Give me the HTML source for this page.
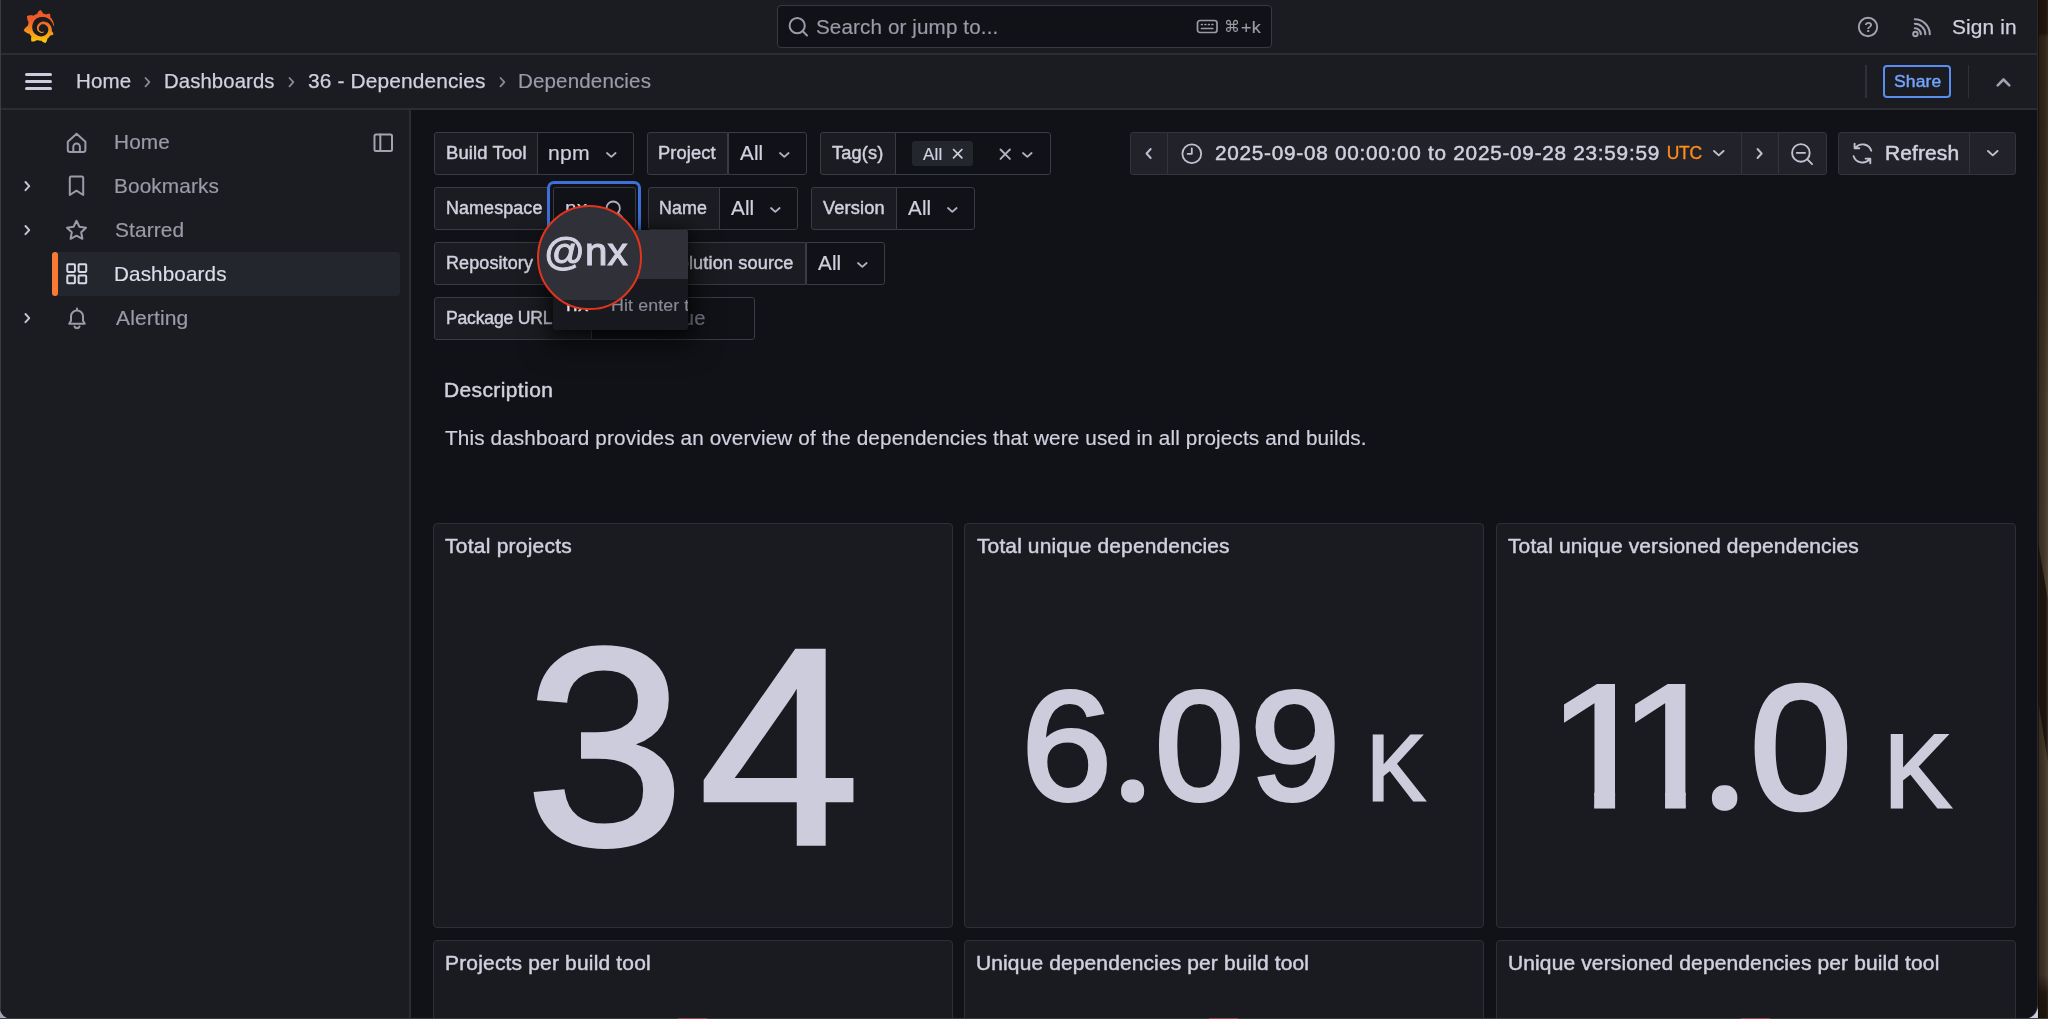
<!DOCTYPE html>
<html lang="en">
<head>
<meta charset="utf-8">
<title>Dependencies - Dashboards - Grafana</title>
<style>
*{box-sizing:border-box;margin:0;padding:0}
html,body{width:2048px;height:1019px;overflow:hidden;background:#3f3023}
body{font-family:"Liberation Sans",Arial,sans-serif;color:#ccccdc;position:relative}
.abs{position:absolute}
.t{position:absolute;white-space:nowrap;line-height:1}
#desk{position:absolute;left:2030px;top:0;width:18px;height:1019px;background:linear-gradient(180deg,#21150d 0,#23170e 33px,#35281b 37px,#392c1e 260px,#483b2c 400px,#4b3e30 540px,#473b2d 760px,#45392c 975px,#23180f 993px,#1e140c 1019px)}
#desk2{position:absolute;left:2038px;top:530px;width:10px;height:250px;background:#1d1510;clip-path:polygon(0 5%,100% 28%,100% 93%,0 68%);filter:blur(1.5px)}
#desk3{position:absolute;left:2038px;top:0;width:10px;height:1019px;background:linear-gradient(90deg,rgba(12,8,4,0.7) 0,rgba(12,8,4,0.7) 1px,rgba(20,14,8,0.32) 1.5px,rgba(20,14,8,0.22) 5px,rgba(20,14,8,0) 8px,rgba(255,240,220,0.06) 10px)}
#win{will-change:transform;position:absolute;left:0;top:0;width:2038px;height:1019px;background:#111217;border-right:1px solid #2a2b31;border-radius:0 0 14px 12px;overflow:hidden}
#cbl{position:absolute;left:0;top:1003px;width:16px;height:16px;background:#a4a4b4}
#cbr{position:absolute;left:2022px;top:1003px;width:16px;height:16px;background:#cdcde1}
#brow{position:absolute;left:0;top:1018px;width:2048px;height:1px;background:#3b3c41;z-index:60}
#lb{position:absolute;left:0;top:0;width:1px;height:1019px;background:#3c3d44;z-index:50}
svg{position:absolute;overflow:visible}
.ic{fill:none;stroke:#b4b4c4;stroke-width:2;stroke-linecap:round;stroke-linejoin:round}
</style>
</head>
<body>
<div id="desk"></div><div id="desk2"></div><div id="desk3"></div><div id="cbl"></div><div id="cbr"></div>
<div id="win">
<div class="abs" style="left:0px;top:0px;width:2039.00px;height:53.00px;background:#1b1c21"></div>
<div class="abs" style="left:0px;top:53px;width:2039.00px;height:2.00px;background:#2c2d33"></div>
<div class="abs" style="left:0px;top:55px;width:2039.00px;height:53.00px;background:#1b1c21"></div>
<div class="abs" style="left:0px;top:108px;width:2039.00px;height:1.5px;background:#2c2d33"></div>
<svg style="left:23px;top:10px" width="31.7" height="33" viewBox="0 0 351 365"><defs><linearGradient id="lg" gradientUnits="userSpaceOnUse" x1="175.5" y1="445.4948" x2="175.5" y2="114.0346"><stop offset="0" stop-color="#FFF100"/><stop offset="1" stop-color="#F05A28"/></linearGradient></defs><path fill="url(#lg)" d="M342,161.2c-0.6-6.1-1.600-13.100-3.600-20.900c-2-7.700-5-16.200-9.400-25c-4.400-8.800-10.100-17.900-17.500-26.8 c-2.900-3.500-6.100-6.900-9.500-10.200c5.100-20.300-6.200-37.900-6.200-37.900c-19.500-1.200-31.9,6.100-36.5,9.400c-0.800-0.300-1.500-0.700-2.300-1 c-3.300-1.300-6.700-2.600-10.300-3.700c-3.500-1.100-7.100-2.100-10.800-3c-3.700-0.900-7.400-1.600-11.200-2.200c-0.700-0.100-1.300-0.200-2-0.3 c-8.500-27.200-32.900-38.600-32.900-38.600c-27.3,17.300-32.4,41.500-32.4,41.500s-0.1,0.500-0.3,1.400c-1.5,0.400-3,0.900-4.5,1.3 c-2.1,0.600-4.2,1.400-6.2,2.200c-2.1,0.800-4.1,1.600-6.2,2.500c-4.1,1.800-8.2,3.800-12.2,6c-3.9,2.200-7.7,4.600-11.4,7.1 c-0.500-0.200-1-0.400-1-0.400c-37.800-14.400-71.3,2.900-71.3,2.900c-3.1,40.2,15.1,65.5,18.7,70.100c-0.9,2.500-1.7,5-2.5,7.5 c-2.8,9.100-4.9,18.400-6.2,28.100c-0.2,1.400-0.4,2.800-0.5,4.200C18.8,192.7,8.5,228,8.5,228c29.1,33.5,63.1,35.6,63.1,35.6 c0,0,0.100-0.1,0.100-0.100c4.3,7.7,9.3,15,14.9,21.900c2.4,2.9,4.8,5.6,7.4,8.300c-10.6,30.4,1.5,55.6,1.5,55.6 c32.4,1.2,53.700-14.2,58.200-17.700c3.2,1.1,6.5,2.1,9.8,2.900c10,2.6,20.2,4.1,30.4,4.500c2.5,0.1,5.1,0.2,7.6,0.100l1.2,0l0.8,0l1.6,0 l1.600-0.100l0,0.100c15.3,21.8,42.1,24.9,42.1,24.900c19.100-20.1,20.200-40.1,20.200-44.400l0,0c0,0,0-0.1,0-0.300c0-0.4,0-0.6,0-0.600l0,0 c0-0.3,0-0.6,0-0.900c4-2.8,7.800-5.8,11.400-9.100c7.600-6.9,14.300-14.8,19.900-23.300c0.500-0.8,1-1.6,1.500-2.400c21.6,1.2,36.900-13.4,36.900-13.4 c-3.600-22.500-16.400-33.500-19.100-35.600l0,0c0,0-0.100-0.100-0.300-0.200c-0.200-0.100-0.200-0.200-0.200-0.200c0,0,0,0,0,0c-0.100-0.100-0.300-0.200-0.500-0.3 c0.100-1.4,0.200-2.7,0.300-4.100c0.200-2.4,0.200-4.9,0.200-7.300l0-1.800l0-0.900l0-0.500c0-0.6,0-0.4,0-0.600l-0.100-1.500l-0.100-2 c0-0.700-0.100-1.300-0.200-1.900c-0.100-0.600-0.100-1.300-0.200-1.900l-0.200-1.900l-0.300-1.900c-0.400-2.500-0.800-4.900-1.400-7.400c-2.300-9.700-6.100-18.900-11-27.2 c-5-8.300-11.200-15.600-18.300-21.800c-7-6.200-14.900-11.200-23.100-14.900c-8.300-3.700-16.900-6.100-25.500-7.200c-4.300-0.600-8.600-0.800-12.900-0.700l-1.6,0l-0.4,0 c-0.1,0-0.6,0-0.5,0l-0.7,0l-1.6,0.100c-0.6,0-1.2,0.100-1.7,0.100c-2.2,0.200-4.4,0.500-6.5,0.900c-8.6,1.600-16.7,4.700-23.8,9 c-7.1,4.300-13.3,9.600-18.3,15.600c-5,6-8.9,12.700-11.6,19.600c-2.7,6.900-4.2,14.100-4.6,21c-0.1,1.700-0.1,3.500-0.1,5.200c0,0.4,0,0.9,0,1.3 l0.1,1.400c0.1,0.8,0.1,1.7,0.2,2.500c0.3,3.5,1,6.9,1.9,10.100c1.9,6.5,4.9,12.4,8.6,17.400c3.7,5,8.2,9.1,12.9,12.4 c4.7,3.2,9.8,5.5,14.8,7c5,1.5,10,2.1,14.7,2.100c0.6,0,1.2,0,1.7,0c0.3,0,0.6,0,0.9,0c0.3,0,0.6,0,0.900-0.100c0.5,0,1-0.1,1.500-0.1 c0.1,0,0.3,0,0.400-0.100l0.500-0.100c0.3,0,0.600-0.1,0.900-0.100c0.600-0.1,1.100-0.2,1.700-0.300c0.600-0.1,1.100-0.2,1.600-0.400c1.100-0.2,2.100-0.6,3.100-0.9 c2-0.7,4-1.5,5.700-2.400c1.800-0.9,3.400-2,5-3c0.400-0.3,0.900-0.6,1.300-1c1.600-1.3,1.900-3.7,0.600-5.300c-1.100-1.400-3.100-1.800-4.700-0.9 c-0.4,0.200-0.8,0.400-1.2,0.600c-1.4,0.700-2.8,1.300-4.3,1.800c-1.5,0.500-3.1,0.900-4.7,1.200c-0.8,0.100-1.6,0.200-2.5,0.300c-0.4,0-0.8,0.100-1.3,0.1 c-0.4,0-0.9,0-1.2,0c-0.4,0-0.8,0-1.2,0c-0.5,0-1,0-1.500-0.100c0,0-0.3,0-0.1,0l-0.2,0l-0.3,0c-0.2,0-0.5,0-0.700-0.1 c-0.500-0.100-0.900-0.100-1.400-0.200c-3.700-0.500-7.400-1.600-10.900-3.200c-3.600-1.600-7-3.800-10.100-6.600c-3.100-2.800-5.800-6.100-7.900-9.900c-2.100-3.800-3.600-8-4.300-12.4 c-0.300-2.200-0.500-4.500-0.400-6.700c0-0.6,0.100-1.2,0.100-1.800c0,0.2,0-0.1,0-0.100l0-0.200l0-0.500c0-0.3,0.100-0.6,0.100-0.900c0.100-1.2,0.300-2.4,0.500-3.6 c1.700-9.6,6.500-19,13.900-26.100c1.900-1.8,3.900-3.4,6-4.900c2.100-1.5,4.400-2.8,6.800-3.900c2.400-1.1,4.800-2,7.400-2.700c2.500-0.7,5.100-1.1,7.800-1.4 c1.300-0.1,2.600-0.2,4-0.200c0.4,0,0.6,0,0.9,0l1.1,0l0.7,0c0.3,0,0,0,0.1,0l0.3,0l1.1,0.100c2.9,0.2,5.7,0.6,8.5,1.3 c5.6,1.2,11.1,3.3,16.2,6.100c10.2,5.7,18.9,14.5,24.2,25.100c2.7,5.3,4.6,11,5.5,16.900c0.2,1.5,0.4,3,0.5,4.500l0.1,1.100l0.1,1.1 c0,0.4,0,0.8,0,1.100c0,0.4,0,0.8,0,1.100l0,1l0,1.100c0,0.700-0.1,1.900-0.1,2.600c-0.1,1.600-0.3,3.300-0.5,4.900c-0.2,1.600-0.5,3.200-0.8,4.8 c-0.3,1.600-0.7,3.200-1.1,4.700c-0.8,3.100-1.8,6.200-3,9.300c-2.4,6-5.6,11.800-9.4,17.100c-7.7,10.600-18.2,19.200-30.2,24.7 c-6,2.700-12.3,4.700-18.8,5.700c-3.2,0.600-6.5,0.900-9.8,1l-0.6,0l-0.5,0l-1.1,0l-1.6,0l-0.8,0c0.4,0-0.1,0-0.1,0l-0.3,0 c-1.8,0-3.500-0.100-5.300-0.300c-7-0.500-13.900-1.800-20.700-3.700c-6.700-1.900-13.200-4.600-19.400-7.800c-12.300-6.600-23.400-15.600-32-26.5 c-4.300-5.400-8.100-11.300-11.200-17.400c-3.100-6.100-5.600-12.600-7.400-19.100c-1.800-6.600-2.900-13.300-3.400-20.100l-0.100-1.300l0-0.300l0-0.300l0-0.600l0-1.100l0-0.3 l0-0.400l0-0.800l0-1.600l0-0.300c0,0,0,0.1,0-0.100l0-0.600c0-0.8,0-1.7,0-2.500c0.100-3.3,0.400-6.8,0.800-10.200c0.400-3.4,1-6.9,1.700-10.3 c0.700-3.4,1.500-6.8,2.500-10.200c1.900-6.7,4.300-13.2,7.100-19.300c5.700-12.2,13.100-23.1,22-31.800c2.200-2.2,4.500-4.2,6.900-6.2 c2.400-1.9,4.900-3.7,7.500-5.400c2.500-1.7,5.200-3.2,7.900-4.600c1.300-0.7,2.700-1.4,4.100-2c0.700-0.3,1.400-0.6,2.100-0.900c0.700-0.3,1.400-0.6,2.100-0.9 c2.800-1.2,5.700-2.2,8.700-3.100c0.700-0.2,1.500-0.4,2.200-0.700c0.700-0.2,1.500-0.4,2.200-0.600c1.500-0.4,3-0.8,4.500-1.100c0.700-0.2,1.500-0.3,2.300-0.5 c0.800-0.2,1.500-0.3,2.300-0.500c0.800-0.1,1.500-0.3,2.300-0.400l1.100-0.200l1.200-0.200c0.800-0.1,1.500-0.2,2.300-0.300c0.900-0.1,1.700-0.2,2.600-0.3 c0.700-0.1,1.900-0.2,2.600-0.300c0.500-0.1,1.100-0.1,1.600-0.200l1.100-0.100l0.500-0.100l0.6,0c0.900-0.1,1.700-0.1,2.600-0.200l1.300-0.100c0,0,0.5,0,0.1,0l0.3,0 l0.6,0c0.7,0,1.500-0.1,2.200-0.100c2.900-0.1,5.900-0.1,8.8,0c5.8,0.2,11.5,0.9,17,1.900c11.1,2.1,21.5,5.6,31,10.3 c9.5,4.6,17.9,10.3,25.3,16.500c0.5,0.4,0.9,0.8,1.4,1.200c0.4,0.4,0.9,0.8,1.3,1.200c0.9,0.8,1.7,1.6,2.6,2.400c0.9,0.8,1.7,1.6,2.5,2.4 c0.8,0.8,1.6,1.6,2.4,2.500c3.1,3.3,6,6.6,8.6,10c5.2,6.7,9.4,13.5,12.7,19.900c0.2,0.4,0.4,0.8,0.6,1.200c0.2,0.4,0.4,0.8,0.6,1.2 c0.4,0.8,0.8,1.6,1.1,2.400c0.4,0.8,0.7,1.5,1.1,2.300c0.3,0.8,0.7,1.5,1,2.300c1.2,3,2.4,5.9,3.3,8.600c1.5,4.4,2.6,8.3,3.5,11.7 c0.3,1.4,1.6,2.3,3,2.100c1.500-0.1,2.600-1.3,2.600-2.800C342.6,170.4,342.5,166.1,342,161.2z"/></svg>
<div class="abs" style="left:776.5px;top:5.2px;width:495.5px;height:42.8px;background:#111217;border:1px solid #393a41;border-radius:4px"></div>
<svg style="left:787px;top:16px" width="22" height="22" viewBox="0 0 22 22"><circle class="ic" cx="10.2" cy="9.7" r="7.6" style="stroke:#9a9aa8"/><path class="ic" d="M15.8 15.300l4.2 4.2" style="stroke:#9a9aa8;stroke-width:2" /></svg>
<div class="t" id="srch" style="left:815.96px;top:16.74px;font-size:20.5px;color:#9a9aa8;letter-spacing:0.12px;transform:scaleX(1.0058);transform-origin:0 0;-webkit-text-stroke:0.18px #9a9aa8;">Search or jump to...</div>
<svg style="left:1196px;top:19px" width="23" height="16" viewBox="0 0 23 16"><rect x="1.5" y="1.5" width="19.5" height="12" rx="2.5" class="ic" style="stroke:#9a9aa8;stroke-width:1.7"/><path class="ic" d="M5.5 5.500h0.800M9 5.500h0.800M12.5 5.500h0.800M16 5.500h0.800M5.5 9.500h11.3" style="stroke:#9a9aa8;stroke-width:1.7" /></svg>
<div class="t" id="kbd" style="left:1240.62px;top:18.81px;font-size:17px;color:#9a9aa8;letter-spacing:0.292px;transform:scaleX(1.0600);transform-origin:0 0;-webkit-text-stroke:0.18px #9a9aa8;">+k</div>
<div class="t" id="cmd" style="left:1224px;top:18.5px;font-size:16px;color:#9a9aa8;font-family:'DejaVu Sans',sans-serif">&#8984;</div>
<svg style="left:1855.9px;top:14.6px" width="24" height="24" viewBox="0 0 24 24"><circle class="ic" cx="12" cy="12" r="9.2" style="stroke:#a2a2b0;stroke-width:1.9"/></svg>
<div class="t" id="q" style="left:1864.26px;top:19.75px;font-size:14px;color:#a2a2b0;letter-spacing:0.000px;font-weight:bold;">?</div>
<svg style="left:1911px;top:17px" width="22" height="21" viewBox="0 0 22 21"><circle class="ic" cx="4.4" cy="17" r="2.25" style="stroke:#a2a2b0;stroke-width:1.9"/><path class="ic" d="M3.8 2.300a15 15 0 0 1 15 15M3.8 6.800a10.5 10.5 0 0 1 10.5 10.500M3.8 11.300a6 6 0 0 1 6 6" style="stroke:#a2a2b0;stroke-width:2.1" stroke-linecap="butt"/></svg>
<div class="t" id="signin" style="left:1952.25px;top:16.94px;font-size:20.5px;color:#d0d0df;letter-spacing:0.12px;transform:scaleX(1.0172);transform-origin:0 0;-webkit-text-stroke:0.25px #d0d0df;">Sign in</div>
<div class="abs" style="left:25px;top:73.19999999999999px;width:27.00px;height:2.8px;background:#ccccdc;border-radius:1.5px"></div>
<div class="abs" style="left:25px;top:80.1px;width:27.00px;height:2.8px;background:#ccccdc;border-radius:1.5px"></div>
<div class="abs" style="left:25px;top:87.0px;width:27.00px;height:2.8px;background:#ccccdc;border-radius:1.5px"></div>
<div class="t" id="c1" style="left:76.32px;top:71.11px;font-size:20.3px;color:#d0d0df;letter-spacing:0.12px;transform:scaleX(1.0115);transform-origin:0 0;-webkit-text-stroke:0.25px #d0d0df;">Home</div>
<svg style="left:144.48px;top:77.1px" width="7.04" height="10.4" viewBox="0 0 7.04 10.4"><path class="ic" d="M1.5 1l3.86 4.20l-3.86 4.2" style="stroke:#8a8a98;stroke-width:1.8" /></svg>
<div class="t" id="c2" style="left:164.33px;top:71.11px;font-size:20.3px;color:#d0d0df;letter-spacing:0.12px;transform:scaleX(1.0005);transform-origin:0 0;-webkit-text-stroke:0.25px #d0d0df;">Dashboards</div>
<svg style="left:288.38000000000005px;top:77.1px" width="7.04" height="10.4" viewBox="0 0 7.04 10.4"><path class="ic" d="M1.5 1l3.86 4.20l-3.86 4.2" style="stroke:#8a8a98;stroke-width:1.8" /></svg>
<div class="t" id="c3" style="left:307.7px;top:71.11px;font-size:20.3px;color:#d0d0df;letter-spacing:0.12px;transform:scaleX(1.0306);transform-origin:0 0;-webkit-text-stroke:0.25px #d0d0df;">36 - Dependencies</div>
<svg style="left:498.78000000000003px;top:77.1px" width="7.04" height="10.4" viewBox="0 0 7.04 10.4"><path class="ic" d="M1.5 1l3.86 4.20l-3.86 4.2" style="stroke:#8a8a98;stroke-width:1.8" /></svg>
<div class="t" id="c4" style="left:518.11px;top:71.11px;font-size:20.3px;color:#9a9aa8;letter-spacing:0.12px;transform:scaleX(1.0148);transform-origin:0 0;-webkit-text-stroke:0.18px #9a9aa8;">Dependencies</div>
<div class="abs" style="left:1865px;top:65px;width:1.7px;height:32.7px;background:#303138"></div>
<div class="abs" style="left:1883px;top:65.2px;width:68.2px;height:32.5px;border:2px solid #5a8df0;border-radius:4px"></div>
<div class="t" id="share" style="left:1893.5px;top:73.78px;font-size:16.8px;color:#74a5ff;letter-spacing:0.12px;transform:scaleX(1.0445);transform-origin:0 0;-webkit-text-stroke:0.4px #74a5ff;">Share</div>
<div class="abs" style="left:1967.7px;top:65px;width:1.7px;height:32.7px;background:#303138"></div>
<svg style="left:1996px;top:76.6px" width="15" height="10" viewBox="0 0 15 10"><path class="ic" d="M1.7 8.300l5.800-5.800l5.8 5.8" style="stroke:#a2a2b0;stroke-width:2.6" /></svg>
<div class="abs" style="left:0px;top:109.5px;width:409.5px;height:909.5px;background:#1b1c21"></div>
<div class="abs" style="left:409px;top:109.5px;width:2.00px;height:909.5px;background:#2c2d33"></div>
<div class="abs" style="left:52px;top:252px;width:347.6px;height:44.00px;background:#24262e;border-radius:4px"></div>
<div class="abs" style="left:52px;top:252px;width:5.6px;height:44.00px;background:#fb7a32;border-radius:3px"></div>
<svg style="left:66px;top:131.5px" width="22" height="22" viewBox="0 0 22 22"><path class="ic" d="M1.8 9.700L10.6 1.800L19.4 9.700V17.800a2.3 2.3 0 0 1 -2.3 2.300H4.100a2.3 2.3 0 0 1 -2.3 -2.300zM7.3 20V14.700a3.3 3.3 0 0 1 6.6 0V20" style="stroke:#9a9aa8;stroke-width:2" /></svg>
<div class="t" id="s1" style="left:113.89px;top:131.81px;font-size:20.3px;color:#9a9aa8;letter-spacing:0.12px;transform:scaleX(1.0250);transform-origin:0 0;-webkit-text-stroke:0.18px #9a9aa8;">Home</div>
<svg style="left:373px;top:132.5px" width="21" height="20" viewBox="0 0 21 20"><rect class="ic" x="1.5" y="1.5" width="17.5" height="16.5" rx="1.5" style="stroke:#a2a2b0"/><path class="ic" d="M7.3 1.500v16.5" style="stroke:#a2a2b0;stroke-width:2" /></svg>
<svg style="left:23.74px;top:181.1px" width="6.92" height="10.2" viewBox="0 0 6.92 10.2"><path class="ic" d="M1.49 1l3.77 4.10l-3.77 4.1" style="stroke:#c4c4d2;stroke-width:2" /></svg>
<svg style="left:68px;top:175.3px" width="17" height="22" viewBox="0 0 17 22"><path class="ic" d="M1.8 3a1.5 1.5 0 0 1 1.5 -1.500h10.400a1.5 1.5 0 0 1 1.5 1.500v17l-6.700-4.300l-6.7 4.300z" style="stroke:#9a9aa8;stroke-width:2" /></svg>
<div class="t" id="s2" style="left:113.89px;top:175.61px;font-size:20.3px;color:#9a9aa8;letter-spacing:0.12px;transform:scaleX(1.0250);transform-origin:0 0;-webkit-text-stroke:0.18px #9a9aa8;">Bookmarks</div>
<svg style="left:23.74px;top:225.1px" width="6.92" height="10.2" viewBox="0 0 6.92 10.2"><path class="ic" d="M1.49 1l3.77 4.10l-3.77 4.1" style="stroke:#c4c4d2;stroke-width:2" /></svg>
<svg style="left:65.2px;top:219.3px" width="23" height="22" viewBox="0 0 23 22"><path class="ic" d="M11.5 1.800l2.9 6l6.6 0.900l-4.8 4.600l1.2 6.500l-5.900-3.100l-5.9 3.100l1.200-6.500l-4.800-4.600l6.600-0.900z" style="stroke:#9a9aa8;stroke-width:2" /></svg>
<div class="t" id="s3" style="left:114.65px;top:219.71px;font-size:20.3px;color:#9a9aa8;letter-spacing:0.12px;transform:scaleX(1.0291);transform-origin:0 0;-webkit-text-stroke:0.18px #9a9aa8;">Starred</div>
<svg style="left:66px;top:263.3px" width="22" height="22" viewBox="0 0 22 22"><rect class="ic" x="1.3" y="1.3" width="7.6" height="7.6" rx="0.8" style="stroke:#d8d8e6"/><rect class="ic" x="12.6" y="1.3" width="7.6" height="7.6" rx="0.8" style="stroke:#d8d8e6"/><rect class="ic" x="1.3" y="12.6" width="7.6" height="7.6" rx="0.8" style="stroke:#d8d8e6"/><rect class="ic" x="12.6" y="12.6" width="7.6" height="7.6" rx="0.8" style="stroke:#d8d8e6"/></svg>
<div class="t" id="s4" style="left:113.9px;top:263.81px;font-size:20.3px;color:#dcdcea;letter-spacing:0.12px;transform:scaleX(1.0191);transform-origin:0 0;-webkit-text-stroke:0.18px #dcdcea;">Dashboards</div>
<svg style="left:23.74px;top:313.09999999999997px" width="6.92" height="10.2" viewBox="0 0 6.92 10.2"><path class="ic" d="M1.49 1l3.77 4.10l-3.77 4.1" style="stroke:#c4c4d2;stroke-width:2" /></svg>
<svg style="left:67px;top:307px" width="20" height="23" viewBox="0 0 20 23"><path class="ic" d="M10 1.500v1.700M4 13.700V9.500a6 6 0 0 1 12 0v4.200l1.8 3H2.200zM7.5 19.500a2.7 2.7 0 0 0 5 0" style="stroke:#9a9aa8;stroke-width:2" /></svg>
<div class="t" id="s5" style="left:115.56px;top:307.81px;font-size:20.3px;color:#9a9aa8;letter-spacing:0.12px;transform:scaleX(1.0385);transform-origin:0 0;-webkit-text-stroke:0.18px #9a9aa8;">Alerting</div>
<div class="abs" style="left:434.3px;top:132px;width:103.7px;height:43.00px;background:#1b1c21;border:1px solid #3a3b43;border-radius:3px 0 0 3px"></div><div class="t" id="l1" style="left:445.89px;top:144.5px;font-size:17.6px;color:#d0d0df;letter-spacing:0.12px;transform:scaleX(1.0453);transform-origin:0 0;-webkit-text-stroke:0.45px #d0d0df;">Build Tool</div>
<div class="abs" style="left:537px;top:132px;width:96.7px;height:43.00px;background:#111217;border:1px solid #3a3b43;border-radius:0 3px 3px 0"></div><div class="t" id="v1" style="left:548.09px;top:142.67px;font-size:20px;color:#d0d0df;letter-spacing:0.172px;transform:scaleX(1.0600);transform-origin:0 0;-webkit-text-stroke:0.18px #d0d0df;">npm</div><svg style="left:605.75px;top:152.075px" width="10.5" height="6.25" viewBox="0 0 10.5 6.25"><path class="ic" d="M1 1l4.31 3.91l4.31 -3.91" style="stroke:#b0b0c0;stroke-width:1.8" /></svg>
<div class="abs" style="left:646.8px;top:132px;width:81.7px;height:43.00px;background:#1b1c21;border:1px solid #3a3b43;border-radius:3px 0 0 3px"></div><div class="t" id="l2" style="left:658.00px;top:144.5px;font-size:17.6px;color:#d0d0df;letter-spacing:0.12px;transform:scaleX(1.0387);transform-origin:0 0;-webkit-text-stroke:0.45px #d0d0df;">Project</div>
<div class="abs" style="left:727.5px;top:132px;width:79.5px;height:43.00px;background:#111217;border:1px solid #3a3b43;border-radius:0 3px 3px 0"></div><div class="t" id="v2" style="left:739.56px;top:142.67px;font-size:20px;color:#d0d0df;letter-spacing:0.12px;transform:scaleX(1.0333);transform-origin:0 0;-webkit-text-stroke:0.18px #d0d0df;">All</div><svg style="left:779.05px;top:152.075px" width="10.5" height="6.25" viewBox="0 0 10.5 6.25"><path class="ic" d="M1 1l4.31 3.91l4.31 -3.91" style="stroke:#b0b0c0;stroke-width:1.8" /></svg>
<div class="abs" style="left:820px;top:132px;width:76.00px;height:43.00px;background:#1b1c21;border:1px solid #3a3b43;border-radius:3px 0 0 3px"></div><div class="t" id="l3" style="left:832.39px;top:144.5px;font-size:17.6px;color:#d0d0df;letter-spacing:0.12px;transform:scaleX(1.0353);transform-origin:0 0;-webkit-text-stroke:0.45px #d0d0df;">Tag(s)</div>
<div class="abs" style="left:895px;top:132px;width:155.5px;height:43.00px;background:#111217;border:1px solid #3a3b43;border-radius:0 3px 3px 0"></div>
<div class="abs" style="left:911.5px;top:141.2px;width:61.5px;height:24.4px;background:#24262e;border-radius:3px"></div>
<div class="t" id="chip" style="left:923.47px;top:145.53px;font-size:16.5px;color:#d0d0df;letter-spacing:0.12px;transform:scaleX(1.0317);transform-origin:0 0;-webkit-text-stroke:0.18px #d0d0df;">All</div>
<svg style="left:951.5px;top:147.8px" width="12" height="12" viewBox="0 0 12 12"><path class="ic" d="M1.5 1.500l8.4 8.400M9.9 1.500l-8.4 8.4" style="stroke:#d0d0df;stroke-width:1.7" /></svg>
<svg style="left:999px;top:148px" width="13" height="13" viewBox="0 0 13 13"><path class="ic" d="M1.5 1.500l9.4 9.400M10.9 1.500l-9.4 9.4" style="stroke:#b0b0c0;stroke-width:1.9" /></svg>
<svg style="left:1022.1500000000001px;top:151.875px" width="10.5" height="6.25" viewBox="0 0 10.5 6.25"><path class="ic" d="M1 1l4.31 3.91l4.31 -3.91" style="stroke:#b0b0c0;stroke-width:1.8" /></svg>
<div class="abs" style="left:434.3px;top:187px;width:115.7px;height:43.00px;background:#1b1c21;border:1px solid #3a3b43;border-radius:3px 0 0 3px"></div><div class="t" id="l4" style="left:445.93px;top:199.5px;font-size:17.6px;color:#d0d0df;letter-spacing:0.12px;transform:scaleX(1.0159);transform-origin:0 0;-webkit-text-stroke:0.45px #d0d0df;">Namespace</div>
<div class="abs" style="left:547px;top:181px;width:94.00px;height:59.00px;border:3px solid #3d71d9;border-radius:7px"></div>
<div class="abs" style="left:553px;top:187px;width:83.00px;height:43.00px;background:#111217;border:1px solid #3a3b43;border-radius:3px"></div>
<div class="t" id="nsv" style="left:564.62px;top:197.67px;font-size:20px;color:#d0d0df;letter-spacing:0.12px;transform:scaleX(1.0405);transform-origin:0 0;-webkit-text-stroke:0.18px #d0d0df;">nx</div>
<svg style="left:605px;top:200.4px" width="19" height="19" viewBox="0 0 19 19"><circle class="ic" cx="8.2" cy="8.2" r="6.7" style="stroke:#b0b0c0;stroke-width:1.8"/><path class="ic" d="M13.3 13.300l3.5 3.5" style="stroke:#b0b0c0;stroke-width:1.8" /></svg>
<div class="abs" style="left:648.4px;top:187px;width:71.3px;height:43.00px;background:#1b1c21;border:1px solid #3a3b43;border-radius:3px 0 0 3px"></div><div class="t" id="l5" style="left:659.24px;top:199.5px;font-size:17.6px;color:#d0d0df;letter-spacing:0.12px;transform:scaleX(1.0139);transform-origin:0 0;-webkit-text-stroke:0.45px #d0d0df;">Name</div>
<div class="abs" style="left:718.7px;top:187px;width:79.3px;height:43.00px;background:#111217;border:1px solid #3a3b43;border-radius:0 3px 3px 0"></div><div class="t" id="v5" style="left:730.76px;top:197.67px;font-size:20px;color:#d0d0df;letter-spacing:0.12px;transform:scaleX(1.0333);transform-origin:0 0;-webkit-text-stroke:0.18px #d0d0df;">All</div><svg style="left:770.05px;top:207.075px" width="10.5" height="6.25" viewBox="0 0 10.5 6.25"><path class="ic" d="M1 1l4.31 3.91l4.31 -3.91" style="stroke:#b0b0c0;stroke-width:1.8" /></svg>
<div class="abs" style="left:811px;top:187px;width:85.7px;height:43.00px;background:#1b1c21;border:1px solid #3a3b43;border-radius:3px 0 0 3px"></div><div class="t" id="l6" style="left:823.12px;top:199.5px;font-size:17.6px;color:#d0d0df;letter-spacing:0.12px;transform:scaleX(1.0363);transform-origin:0 0;-webkit-text-stroke:0.45px #d0d0df;">Version</div>
<div class="abs" style="left:895.7px;top:187px;width:79.3px;height:43.00px;background:#111217;border:1px solid #3a3b43;border-radius:0 3px 3px 0"></div><div class="t" id="v6" style="left:907.76px;top:197.67px;font-size:20px;color:#d0d0df;letter-spacing:0.12px;transform:scaleX(1.0333);transform-origin:0 0;-webkit-text-stroke:0.18px #d0d0df;">All</div><svg style="left:947.05px;top:207.075px" width="10.5" height="6.25" viewBox="0 0 10.5 6.25"><path class="ic" d="M1 1l4.31 3.91l4.31 -3.91" style="stroke:#b0b0c0;stroke-width:1.8" /></svg>
<div class="abs" style="left:434.3px;top:242px;width:112.00px;height:43.00px;background:#1b1c21;border:1px solid #3a3b43;border-radius:3px 0 0 3px"></div><div class="t" id="l7" style="left:445.93px;top:254.5px;font-size:17.6px;color:#d0d0df;letter-spacing:0.12px;transform:scaleX(1.0202);transform-origin:0 0;-webkit-text-stroke:0.45px #d0d0df;">Repository</div>
<div class="abs" style="left:545.3px;top:242px;width:79.4px;height:43.00px;background:#111217;border:1px solid #3a3b43;border-radius:0 3px 3px 0"></div><div class="t" id="v7" style="left:557.36px;top:252.67px;font-size:20px;color:#d0d0df;letter-spacing:0.12px;transform:scaleX(1.0333);transform-origin:0 0;-webkit-text-stroke:0.18px #d0d0df;">All</div><svg style="left:596.75px;top:262.075px" width="10.5" height="6.25" viewBox="0 0 10.5 6.25"><path class="ic" d="M1 1l4.31 3.91l4.31 -3.91" style="stroke:#b0b0c0;stroke-width:1.8" /></svg>
<div class="abs" style="left:637.8px;top:242px;width:168.7px;height:43.00px;background:#1b1c21;border:1px solid #3a3b43;border-radius:3px 0 0 3px"></div><div class="t" id="l8" style="left:646.01px;top:254.5px;font-size:17.6px;color:#d0d0df;letter-spacing:0.12px;transform:scaleX(1.0326);transform-origin:0 0;-webkit-text-stroke:0.45px #d0d0df;">Resolution source</div>
<div class="abs" style="left:805.5px;top:242px;width:79.3px;height:43.00px;background:#111217;border:1px solid #3a3b43;border-radius:0 3px 3px 0"></div><div class="t" id="v8" style="left:817.56px;top:252.67px;font-size:20px;color:#d0d0df;letter-spacing:0.12px;transform:scaleX(1.0333);transform-origin:0 0;-webkit-text-stroke:0.18px #d0d0df;">All</div><svg style="left:856.8499999999999px;top:262.075px" width="10.5" height="6.25" viewBox="0 0 10.5 6.25"><path class="ic" d="M1 1l4.31 3.91l4.31 -3.91" style="stroke:#b0b0c0;stroke-width:1.8" /></svg>
<div class="abs" style="left:434.3px;top:297px;width:157.7px;height:43.00px;background:#1b1c21;border:1px solid #3a3b43;border-radius:3px 0 0 3px"></div><div class="t" id="l9" style="left:445.96px;top:309.5px;font-size:17.6px;color:#d0d0df;letter-spacing:-0.193px;-webkit-text-stroke:0.45px #d0d0df;">Package URL</div>
<div class="abs" style="left:591px;top:297px;width:163.8px;height:43.00px;background:#111217;border:1px solid #3a3b43;border-radius:0 3px 3px 0"></div>
<div class="t" id="pv" style="left:601.84px;top:307.87px;font-size:20px;color:#7a7a88;letter-spacing:0.12px;transform:scaleX(1.0106);transform-origin:0 0;-webkit-text-stroke:0.18px #7a7a88;">Enter value</div>
<div class="abs" style="left:1130px;top:132px;width:38.00px;height:43.00px;background:#22232a;border:1px solid #34353c;border-radius:3px 0 0 3px"></div>
<svg style="left:1144.6px;top:147.8px" width="7.4" height="11.0" viewBox="0 0 7.4 11.0"><path class="ic" d="M5.68 1l-4.14 4.50l4.14 4.5" style="stroke:#c0c0d0;stroke-width:1.9" /></svg>
<div class="abs" style="left:1167px;top:132px;width:574.6px;height:43.00px;background:#22232a;border:1px solid #34353c;"></div>
<svg style="left:1180.6px;top:142.6px" width="22" height="22" viewBox="0 0 22 22"><circle class="ic" cx="10.8" cy="10.8" r="9.4" style="stroke:#c0c0d0;stroke-width:1.8"/><path class="ic" d="M10.8 5.300v5.500h-4.2" style="stroke:#c0c0d0;stroke-width:1.8" /></svg>
<div class="t" id="tr" style="left:1214.76px;top:143.8px;font-size:19.6px;color:#d0d0df;letter-spacing:0.682px;transform:scaleX(1.0600);transform-origin:0 0;-webkit-text-stroke:0.45px #d0d0df;">2025-09-08 00:00:00 to 2025-09-28 23:59:59</div>
<div class="t" id="utc" style="left:1666.65px;top:145.38px;font-size:17.5px;color:#ff8c1a;letter-spacing:-0.226px;-webkit-text-stroke:0.35px #ff8c1a;">UTC</div>
<svg style="left:1713.15px;top:150.025px" width="11.5" height="6.75" viewBox="0 0 11.5 6.75"><path class="ic" d="M1 1l4.77 4.37l4.77 -4.37" style="stroke:#c0c0d0;stroke-width:1.9" /></svg>
<div class="abs" style="left:1740.6px;top:132px;width:38.3px;height:43.00px;background:#22232a;border:1px solid #34353c;"></div>
<svg style="left:1755.7px;top:148.0px" width="7.4" height="11.0" viewBox="0 0 7.4 11.0"><path class="ic" d="M1.54 1l4.14 4.50l-4.14 4.5" style="stroke:#c0c0d0;stroke-width:1.9" /></svg>
<div class="abs" style="left:1777.9px;top:132px;width:48.7px;height:43.00px;background:#22232a;border:1px solid #34353c;border-radius:0 3px 3px 0"></div>
<svg style="left:1790px;top:142px" width="24" height="24" viewBox="0 0 24 24"><circle class="ic" cx="10.9" cy="10.9" r="8.8" style="stroke:#c0c0d0;stroke-width:1.9"/><path class="ic" d="M17.4 17.400l4.7 4.700M6.8 10.900h8.2" style="stroke:#c0c0d0;stroke-width:1.9" /></svg>
<div class="abs" style="left:1838px;top:132px;width:131.6px;height:43.00px;background:#22232a;border:1px solid #34353c;border-radius:3px 0 0 3px"></div>
<svg style="left:1851px;top:142px" width="23" height="23" viewBox="0 0 23 23"><path class="ic" d="M20.3 8.700A9.3 9.3 0 0 0 4.3 5.800M3.6 1.600v4.700h4.700M2.6 14.200a9.3 9.3 0 0 0 16 2.900M19.3 21.300v-4.700h-4.7" style="stroke:#c0c0d0;stroke-width:1.9" /></svg>
<div class="t" id="rf" style="left:1884.78px;top:143.07px;font-size:20px;color:#d0d0df;letter-spacing:0.12px;transform:scaleX(1.0470);transform-origin:0 0;-webkit-text-stroke:0.5px #d0d0df;">Refresh</div>
<div class="abs" style="left:1968.6px;top:132px;width:47.00px;height:43.00px;background:#22232a;border:1px solid #34353c;border-radius:0 3px 3px 0"></div>
<svg style="left:1986.85px;top:150.025px" width="11.5" height="6.75" viewBox="0 0 11.5 6.75"><path class="ic" d="M1 1l4.77 4.37l4.77 -4.37" style="stroke:#c0c0d0;stroke-width:1.9" /></svg>
<div class="t" id="dh" style="left:444.08px;top:380.74px;font-size:19.8px;color:#d0d0df;letter-spacing:0.377px;transform:scaleX(1.0600);transform-origin:0 0;-webkit-text-stroke:0.45px #d0d0df;">Description</div>
<div class="t" id="dt" style="left:445.33px;top:428.47px;font-size:20px;color:#d0d0df;letter-spacing:0.12px;transform:scaleX(1.0355);transform-origin:0 0;-webkit-text-stroke:0.18px #d0d0df;">This dashboard provides an overview of the dependencies that were used in all projects and builds.</div>
<div class="abs" style="left:433px;top:523.2px;width:519.6px;height:404.8px;background:#1a1b20;border:1px solid #2e2f36;border-radius:4px"></div>
<div class="abs" style="left:433px;top:939.8px;width:519.6px;height:160.2px;background:#1a1b20;border:1px solid #2e2f36;border-radius:4px"></div>
<div class="abs" style="left:964px;top:523.2px;width:520.2px;height:404.8px;background:#1a1b20;border:1px solid #2e2f36;border-radius:4px"></div>
<div class="abs" style="left:964px;top:939.8px;width:520.2px;height:160.2px;background:#1a1b20;border:1px solid #2e2f36;border-radius:4px"></div>
<div class="abs" style="left:1495.6px;top:523.2px;width:520.2px;height:404.8px;background:#1a1b20;border:1px solid #2e2f36;border-radius:4px"></div>
<div class="abs" style="left:1495.6px;top:939.8px;width:520.2px;height:160.2px;background:#1a1b20;border:1px solid #2e2f36;border-radius:4px"></div>
<div class="t" id="p1" style="left:445.33px;top:536.84px;font-size:19.8px;color:#d0d0df;letter-spacing:0.239px;transform:scaleX(1.0600);transform-origin:0 0;-webkit-text-stroke:0.45px #d0d0df;">Total projects</div>
<div class="t" id="p2" style="left:976.53px;top:536.84px;font-size:19.8px;color:#d0d0df;letter-spacing:0.12px;transform:scaleX(1.0599);transform-origin:0 0;-webkit-text-stroke:0.45px #d0d0df;">Total unique dependencies</div>
<div class="t" id="p3" style="left:1507.93px;top:536.84px;font-size:19.8px;color:#d0d0df;letter-spacing:0.125px;transform:scaleX(1.0600);transform-origin:0 0;-webkit-text-stroke:0.45px #d0d0df;">Total unique versioned dependencies</div>
<div class="t" id="p4" style="left:444.88px;top:953.64px;font-size:19.8px;color:#d0d0df;letter-spacing:0.175px;transform:scaleX(1.0600);transform-origin:0 0;-webkit-text-stroke:0.45px #d0d0df;">Projects per build tool</div>
<div class="t" id="p5" style="left:976.38px;top:953.64px;font-size:19.8px;color:#d0d0df;letter-spacing:0.122px;transform:scaleX(1.0600);transform-origin:0 0;-webkit-text-stroke:0.45px #d0d0df;">Unique dependencies per build tool</div>
<div class="t" id="p6" style="left:1507.78px;top:953.64px;font-size:19.8px;color:#d0d0df;letter-spacing:0.128px;transform:scaleX(1.0600);transform-origin:0 0;-webkit-text-stroke:0.45px #d0d0df;">Unique versioned dependencies per build tool</div>
<svg id="bigs" style="left:0;top:0" width="2039" height="1019" font-family="Liberation Sans, Arial, sans-serif" font-size="256" fill="#ccccdc" stroke="#ccccdc"><defs><clipPath id="c1_1" clipPathUnits="userSpaceOnUse"><polygon points="12.5,-200.00 89.32,-200.00 89.32,12.5 62.06,12.5 62.06,-22.94 12.5,-22.94"/></clipPath><clipPath id="c1_2" clipPathUnits="userSpaceOnUse"><polygon points="12.5,-200.00 89.33,-200.00 89.33,12.5 62.05,12.5 62.05,-22.95 12.5,-22.95"/></clipPath></defs>
<g><text transform="matrix(1.1147 0 0 1.0963 525.53 843.76)" stroke-width="4.52">3</text><text transform="matrix(1.1217 0 0 1.0907 699.61 843.30)" stroke-width="4.52">4</text></g>
<g><text transform="matrix(0.6375 0 0 0.6058 1021.21 799.09)" stroke-width="6.44">6</text><text transform="matrix(0.0731 0 0 0.0731 1130.1 792.20)" stroke-width="290.18" stroke-linejoin="round">.</text><text transform="matrix(0.6259 0 0 0.6058 1154.74 799.09)" stroke-width="6.5">0</text><text transform="matrix(0.6342 0 0 0.6058 1250.09 799.09)" stroke-width="6.45">9</text><text transform="matrix(0.3391 0 0 0.3588 1367.08 799.80)" stroke-width="8.03">K</text></g>
<g><text transform="matrix(0.7663 0 0 0.6881 1546.63 807.40)" stroke-width="4.13" clip-path="url(#c1_1)">1</text><text transform="matrix(0.7583 0 0 0.6881 1618.03 807.40)" stroke-width="4.15" clip-path="url(#c1_2)">1</text><text transform="matrix(0.0731 0 0 0.0731 1721.95 798.90)" stroke-width="322.34" stroke-linejoin="round">.</text><text transform="matrix(0.7183 0 0 0.6863 1749.87 807.53)" stroke-width="6.41">0</text><text transform="matrix(0.3922 0 0 0.4048 1884.06 807.40)" stroke-width="7.53">K</text></g>
</svg>
<div class="abs" id="menu" style="left:553.3px;top:229.5px;width:134.5px;height:100.3px;background:#18191e;border-radius:2px;box-shadow:0 10px 28px 6px rgba(0,0,0,0.55),0 0 8px rgba(0,0,0,0.5);overflow:hidden">
<div class="abs" style="left:0px;top:0px;width:134.5px;height:49.7px;background:#303138"></div>
</div>
<div class="t" id="m0" style="left:564.44px;top:243.91px;font-size:19px;color:#d0d0df;letter-spacing:0.12px;transform:scaleX(1.0422);transform-origin:0 0;-webkit-text-stroke:0.18px #d0d0df;">@nx</div>
<div class="t" id="m1" style="left:566.33px;top:294.99px;font-size:19.5px;color:#dcdcea;letter-spacing:0.518px;transform:scaleX(1.0600);transform-origin:0 0;-webkit-text-stroke:0.3px #dcdcea;">nx</div>
<div class="abs" style="left:600px;top:290px;width:87.8px;height:36px;overflow:hidden"><div class="t" id="m2" style="left:11.34px;top:6.85px;font-size:17.3px;color:#8a8a98;letter-spacing:0.12px;transform:scaleX(1.0278);transform-origin:0 0;-webkit-text-stroke:0.18px #8a8a98;">Hit enter to add</div></div>
<div class="abs" id="mag" style="left:537.4px;top:205.4px;width:104.9px;height:104.9px;border-radius:50%;border:2.6px solid #e2341d;background:#303138;overflow:hidden">
<div class="abs" style="left:-3px;top:92.4px;width:113.00px;height:19.6px;background:#1d1e23"></div>
</div>
<div class="t" id="mg" style="left:543.63px;top:232.18px;font-size:39px;color:#d2d2e2;letter-spacing:0.12px;transform:scaleX(1.0331);transform-origin:0 0;-webkit-text-stroke:1.1px #d2d2e2;">@nx</div>
<div id="lb"></div>
</div>
<div id="brow"></div>
<div class="abs" style="left:678px;top:1018px;width:29px;height:1px;background:#a2424e;z-index:61"></div><div class="abs" style="left:1209px;top:1018px;width:29px;height:1px;background:#a2424e;z-index:61"></div><div class="abs" style="left:1741px;top:1018px;width:29px;height:1px;background:#a2424e;z-index:61"></div>
</body>
</html>
